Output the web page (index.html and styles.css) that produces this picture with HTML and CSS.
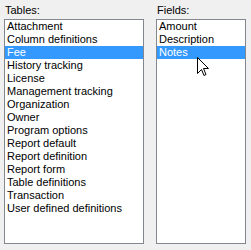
FILE: index.html
```html
<!DOCTYPE html>
<html lang="en">
<head>
  <meta charset="UTF-8">
  <title>Tables and Fields</title>
  <link rel="stylesheet" href="styles.css">
</head>
<body>
  <div class="picker">
    <div class="column tables">
      <label class="caption">Tables:</label>
      <ul class="listbox">
        <li>Attachment</li>
        <li>Column definitions</li>
        <li class="selected">Fee</li>
        <li>History tracking</li>
        <li>License</li>
        <li>Management tracking</li>
        <li>Organization</li>
        <li>Owner</li>
        <li>Program options</li>
        <li>Report default</li>
        <li>Report definition</li>
        <li>Report form</li>
        <li>Table definitions</li>
        <li>Transaction</li>
        <li>User defined definitions</li>
      </ul>
    </div>

    <div class="column fields">
      <label class="caption">Fields:</label>
      <ul class="listbox">
        <li>Amount</li>
        <li>Description</li>
        <li class="selected">Notes</li>
      </ul>
      <!-- mouse pointer hovering over the selected field -->
      <svg class="pointer" width="12" height="19" viewBox="0 0 12 19">
        <path d="M0.5 0.5 V16.5 L4.5 12.5 L7 18.5 L9 17.5 L6.5 11.5 H11.5 Z" fill="#fff" stroke="#000" stroke-width="1" stroke-linejoin="miter"/>
      </svg>
    </div>
  </div>
</body>
</html>
```

FILE: styles.css
```css
body {
  margin: 0;
  background: #f0f0f0;
  font-family: "Liberation Sans", Arial, sans-serif;
  font-size: 11px;
  color: #000;
}

.picker {
  display: flex;
  gap: 12px;
  padding: 4px 0 0 4px;
}

.column {
  position: relative;
  display: flex;
  flex-direction: column;
}

.caption {
  display: block;
  height: 15px;
  line-height: 13px;
  padding-left: 1px;
}

.listbox {
  list-style: none;
  margin: 0;
  padding: 0;
  background: #fff;
  border: 1px solid #828790;
  height: 223px;
  box-sizing: content-box;
}

.tables .listbox {
  width: 138px;
}

.fields .listbox {
  width: 88px;
}

.listbox li {
  height: 13px;
  line-height: 13px;
  padding-left: 2px;
  white-space: nowrap;
}

.listbox li.selected {
  background: #3399ff;
  color: #fff;
}

.pointer {
  position: absolute;
  left: 41px;
  top: 53px;
}
```
